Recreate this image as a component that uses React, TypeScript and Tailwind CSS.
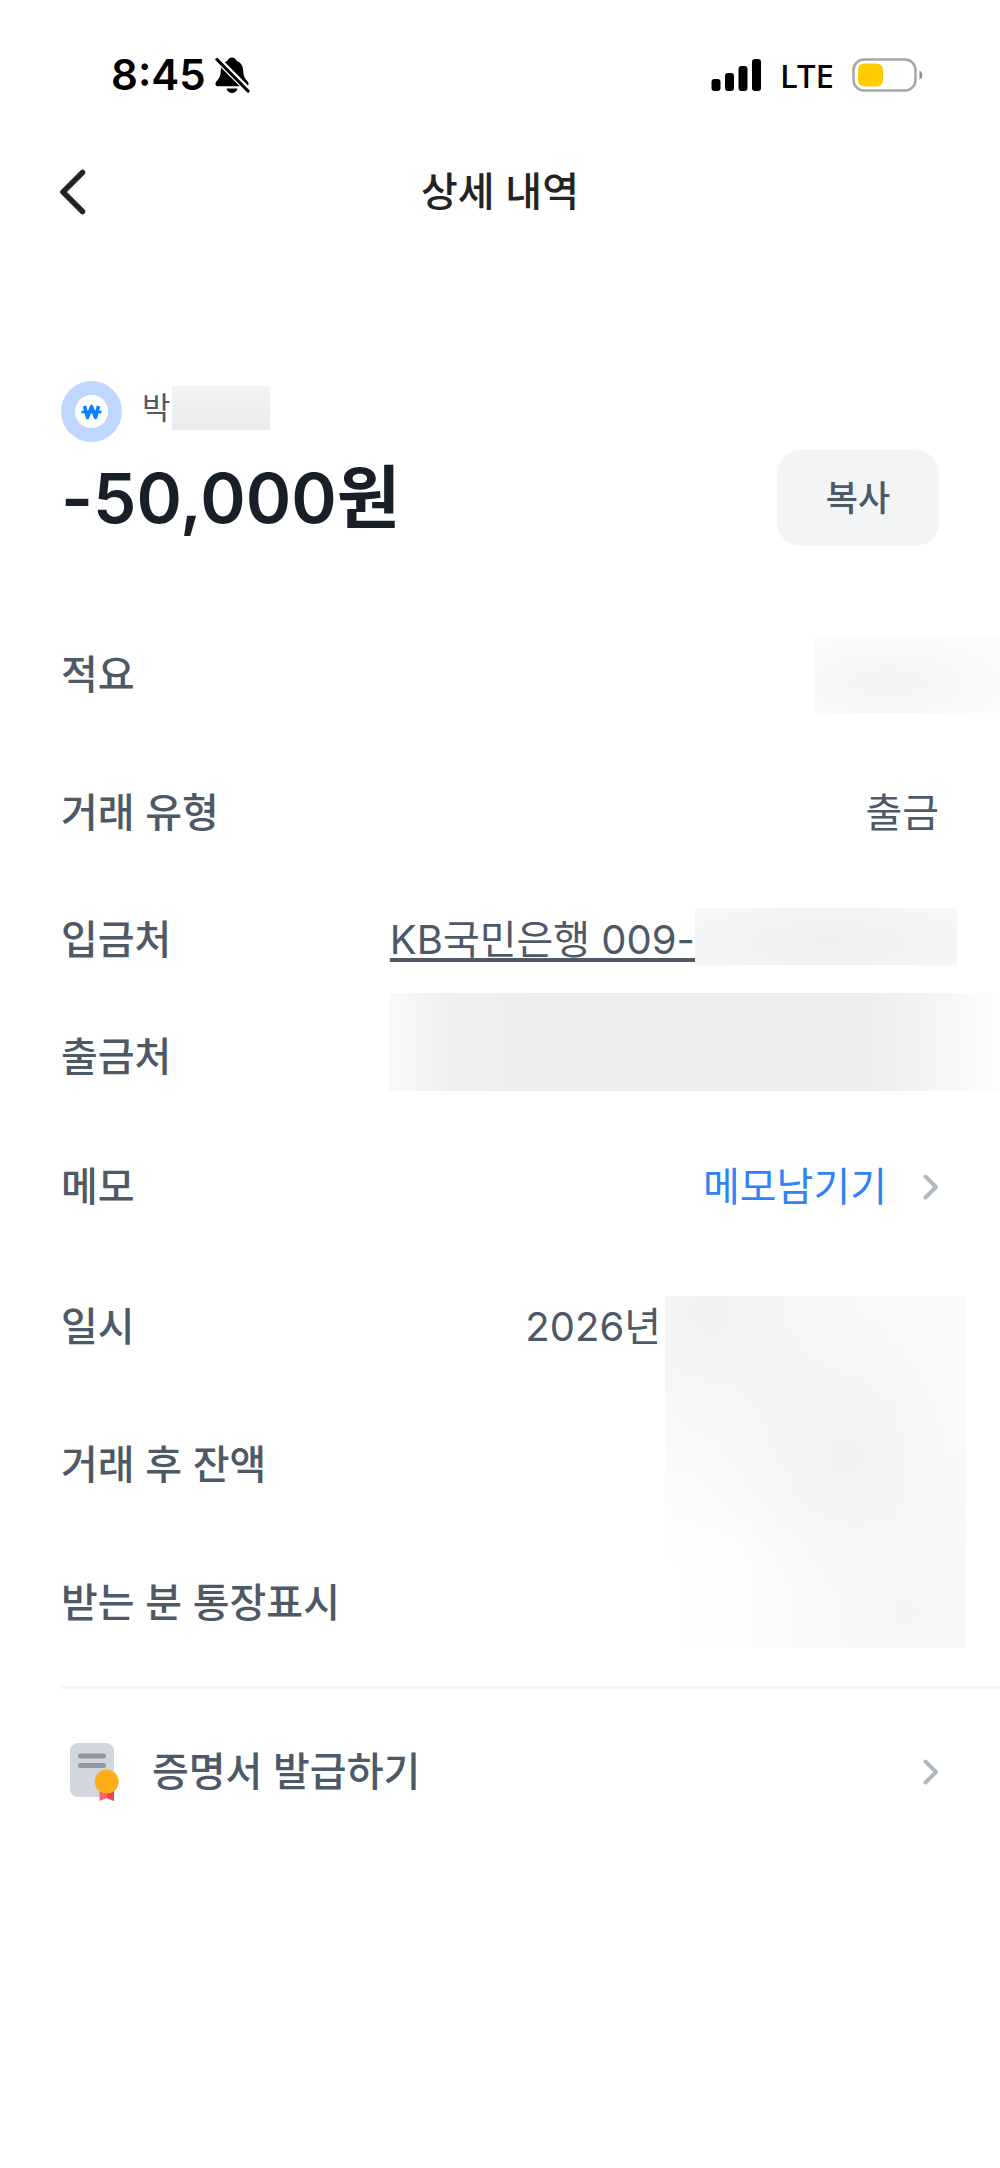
import React from 'react';

interface RowProps {
  label: string;
  className: string;
  children?: React.ReactNode;
}

const Row: React.FC<RowProps> = ({ label, className, children }) => (
  <div className={`flex items-center justify-between ${className}`}>
    <dt className="font-medium whitespace-nowrap">{label}</dt>
    <dd className="flex items-center">{children}</dd>
  </div>
);

const ChevronRight = () => (
  <svg className="w-4 h-7" fill="none" viewBox="0 0 16 28" stroke="#b0b8c1" aria-hidden="true">
    <path strokeLinecap="round" strokeLinejoin="round" strokeWidth={4} d="M2.5 3.5L13 14L2.5 24.5" />
  </svg>
);

const BellOffIcon = () => (
  <svg className="w-9 h-9" viewBox="0 0 36 36" aria-label="무음">
    <path d="M18 0.500c-2.300 0-4 1.300-4.600 3.200C9.300 5.200 7 8.800 6.800 13.500C6.600 19.500 5 21.500 2.500 24.200C0.500 26.700 1.500 29.300 4.500 29.300H31.500C34.500 29.300 35.500 26.700 33.500 24.200C31 21.500 29.400 19.500 29.200 13.500C29 8.800 26.700 5.200 22.600 3.700C22 1.800 20.300 0.500 18 0.500Z" fill="black" />
    <path d="M12.500 31.500H23.500C22.800 34.300 20.700 36 18 36S13.200 34.300 12.500 31.500Z" fill="black" />
    <path d="M3 2L35 34" stroke="white" strokeWidth="6.500" />
    <path d="M3 2.500L34 34" stroke="black" strokeWidth="3.200" strokeLinecap="round" />
  </svg>
);

const StatusBar = () => (
  <div className="flex items-center justify-between h-[150px] pl-[111px] pr-[77px] text-black">
    <div className="flex items-center gap-2">
      <span className="text-[42px] leading-none font-semibold">8:45</span>
      <BellOffIcon />
    </div>
    <div className="flex items-center gap-[18px]">
      <svg className="w-[51px] h-8" viewBox="0 0 51 32" aria-hidden="true">
        <rect x="0.500" y="20" width="9" height="12" rx="3" />
        <rect x="14" y="14" width="9" height="18" rx="3" />
        <rect x="27.500" y="7" width="9" height="25" rx="3" />
        <rect x="41" y="0" width="9" height="32" rx="3" />
      </svg>
      <span className="font-['Noto_Sans',sans-serif] text-[33px] leading-none font-medium">LTE</span>
      <svg className="w-[71px] h-[34px]" viewBox="0 0 71 34" aria-label="배터리">
        <rect x="1.500" y="1.500" width="62" height="31" rx="10.500" fill="none" stroke="#a6a6a6" strokeWidth="2.500" />
        <rect x="6" y="5.500" width="25" height="23" rx="6" fill="#ffcc00" />
        <path d="M67.500 12.500V21.500C69.200 20.700 70.300 19 70.300 17S69.200 13.300 67.500 12.500Z" fill="#8e8e8e" />
      </svg>
    </div>
  </div>
);

const Header = () => (
  <header className="grid grid-cols-[1fr_auto_1fr] items-center h-[84px] px-[58px]">
    <button type="button" aria-label="뒤로" className="justify-self-start">
      <svg className="w-8 h-12" fill="none" viewBox="0 0 32 48" stroke="#212325">
        <path strokeLinecap="round" strokeLinejoin="round" strokeWidth={5.5} d="M24.500 4.500L5 24L24.500 43.500" />
      </svg>
    </button>
    <h1 className="text-[40px] leading-[56px] font-medium text-[#212325]">상세 내역</h1>
  </header>
);

const WonBadge = () => (
  <svg className="w-[61px] h-[61px]" viewBox="0 0 61 61" aria-hidden="true">
    <circle cx="30.500" cy="30.500" r="30.500" fill="#c0d8ff" />
    <circle cx="30.500" cy="30.500" r="16.500" fill="white" />
    <path d="M23.500 25L26.500 36.500L30.500 25.500L34.500 36.500L37.500 25" fill="none" stroke="#0a84ff" strokeWidth="3.600" strokeLinejoin="round" />
    <path d="M20.500 31H40.500" stroke="#0a84ff" strokeWidth="2.800" />
  </svg>
);

const CertificateIcon = () => (
  <svg className="w-[50px] h-[60px]" viewBox="0 0 50 60" aria-hidden="true">
    <rect x="0" y="1" width="44" height="54" rx="8" fill="#d1d6df" />
    <rect x="8" y="11.500" width="28" height="5" rx="2.500" fill="#8f97a3" />
    <rect x="8" y="21" width="28" height="5" rx="2.500" fill="#8f97a3" />
    <path d="M29.500 46H44V59L36.700 56L29.500 59Z" fill="#ff6069" />
    <path d="M36.700 46H44V59L36.700 56Z" fill="#f04452" />
    <circle cx="36.700" cy="39.500" r="12" fill="#ffae1a" />
  </svg>
);

export default function App() {
  return (
    <div className="min-h-screen bg-white font-['Inter','Noto_Sans_CJK_KR',sans-serif] text-[#4e5968]">
      <StatusBar />
      <Header />

      <main className="pt-[147px]">
        {/* Summary */}
        <section className="pl-[61px] pr-[61px]">
          <div className="flex items-center">
            <WonBadge />
            <div className="flex items-center ml-5 mb-2">
              <span className="text-[31px] leading-10">박</span>
              <span className="ml-px w-[98px] h-11 bg-linear-to-b from-[#f4f4f5] to-[#e9eaeb]" />
            </div>
          </div>
          <div className="flex items-start justify-between h-[164px]">
            <p className="text-[69px] leading-[112px] font-semibold text-[#191f28]">-50,000원</p>
            <button type="button" className="mt-2 w-[162px] h-24 rounded-3xl bg-[#f2f4f6] text-[35px] font-medium">
              복사
            </button>
          </div>
        </section>

        {/* Transaction details */}
        <dl className="pl-[61px] text-[40px] leading-[56px]">
          <Row label="적요" className="h-[138px]">
            <span className="w-[186px] h-[76px] bg-radial-[at_40%_60%] from-[#f4f5f5] from-20% to-[#fdfdfd] to-100%" />
          </Row>
          <Row label="거래 유형" className="h-[138px] pr-[61px]">출금</Row>
          <Row label="입금처" className="h-[116px] pr-[43px]">
            <a href="#account" className="underline decoration-4 underline-offset-4 [text-decoration-skip-ink:none]">
              KB국민은행 009-
            </a>
            <span className="mb-2 w-[262px] h-[57px] bg-radial-[at_50%_60%] from-[#eff0f1] to-[#f6f7f7]" />
          </Row>
          <Row label="출금처" className="h-[118px]">
            <span className="w-[611px] h-[98px] mb-[30px] bg-[linear-gradient(to_right,#f8f9f9,#eff0f1_10%,#ecedee_25%,#ecedee_78%,#f6f7f7_92%,#fdfdfd)]" />
          </Row>
          <Row label="메모" className="h-[142px] pr-[61px]">
            <button type="button" className="flex items-center gap-9 text-[#3182f6]">
              메모남기기
              <ChevronRight />
            </button>
          </Row>
          <div className="flex pr-[34px]">
            <div className="flex-1">
              <Row label="일시" className="h-[138px] pr-1">2026년</Row>
              <Row label="거래 후 잔액" className="h-[138px]" />
              <Row label="받는 분 통장표시" className="h-[138px]" />
            </div>
            <div className="mt-[38px] w-[301px] h-[352px] bg-[radial-gradient(circle_at_15%_5%,#f1f2f4,transparent_60%),radial-gradient(circle_at_60%_45%,#f1f2f4,transparent_55%),radial-gradient(circle_at_80%_90%,#f4f5f5,transparent_45%),linear-gradient(to_right,#ffffff,#fafafa)]" />
          </div>
        </dl>

        <hr className="mt-[14px] ml-[61px] border-t-3 border-[#f5f6f7]" />

        <button type="button" className="flex items-center w-full h-[166px] pl-[70px] pr-[61px] text-[40px] leading-[56px] font-medium">
          <CertificateIcon />
          <span className="ml-8 flex-1 text-left">증명서 발급하기</span>
          <ChevronRight />
        </button>
      </main>
    </div>
  );
}
